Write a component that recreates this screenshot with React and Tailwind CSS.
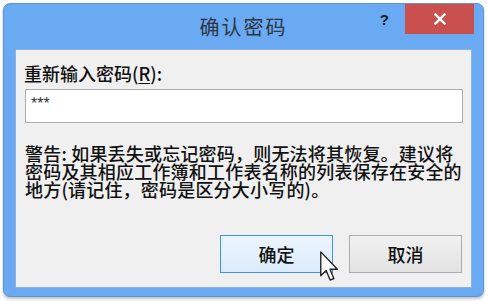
import React from "react";

function Cursor() {
  return (
    <svg width="20" height="31" viewBox="0 0 13 20" className="absolute left-[320px] top-[251px]">
      <path d="M0.5 0.5 L0.5 16 L4 12.6 L6.6 18.8 L9 17.8 L6.5 11.8 L11.3 11.8 Z" fill="#fff" stroke="#222" strokeWidth="0.9" strokeLinejoin="round" />
    </svg>
  );
}

export default function App() {
  return (
    <div className="relative w-[488px] h-[301px] bg-white overflow-hidden" style={{ fontFamily: '"Noto Sans CJK SC", "Noto Sans", sans-serif' }}>
      <div className="ml-[3px] mt-[3px] w-[481px] h-[294px] rounded-[7px] bg-[#69aaf3] border border-[#5e95d3] shadow-[0_2px_3px_rgba(0,0,0,0.25)] flex flex-col">
        <div className="h-[45px] grid grid-cols-[1fr_auto_1fr]">
          <div />
          <div className="pt-[10px] text-[20px] leading-[26px] tracking-[2px] text-[#2d3540]">确认密码</div>
          <div className="flex justify-end items-start pr-[9px]">
            <div className="mt-[7px] mr-[16px] text-[15px] leading-[18px] font-bold text-[#1a1a1a]" style={{ fontFamily: '"Liberation Sans", sans-serif' }}>?</div>
            <div className="w-[69px] h-[30px] bg-[#c9504f] flex items-center justify-center">
              <svg width="12" height="12" viewBox="0 0 12 12">
                <path d="M1.5 1.5 L10.5 10.5 M10.5 1.5 L1.5 10.5" stroke="#fff" strokeWidth="2.4" strokeLinecap="square" />
              </svg>
            </div>
          </div>
        </div>
        <div className="mx-[11px] h-[239px] bg-[#f0f0f0] border border-[#8fb2dc] flex flex-col text-[#111] font-medium">
          <div className="mt-[11px] ml-[8px] text-[18px] leading-[24px]">
            重新输入密码(<span className="underline underline-offset-[2px]">R</span>):
          </div>
          <div className="mt-[4px] ml-[9px] mr-[8px] h-[34px] bg-white border border-[#acacac] pl-[5px] pt-[6px] text-[16px] leading-[16px] text-[#333] font-normal" style={{ fontFamily: '"Liberation Sans", sans-serif' }}>
            ***
          </div>
          <p className="mt-[21px] ml-[9px] mr-[2px] text-[18px] leading-[18px] whitespace-nowrap tracking-[0.2px]">
            <span className="block">警告: 如果丢失或忘记密码，则无法将其恢复。建议将</span>
            <span className="block">密码及其相应工作簿和工作表名称的列表保存在安全的</span>
            <span className="block">地方(请记住，密码是区分大小写的)。</span>
          </p>
          <div className="mt-auto mb-[14px] mr-[9px] flex justify-end gap-[16px]">
            <div className="w-[113px] h-[38px] border border-[#3c95e0] bg-gradient-to-b from-[#ecf5fd] to-[#dcecfc] flex items-center justify-center text-[18px]">确定</div>
            <div className="w-[113px] h-[38px] border border-[#adadad] bg-gradient-to-b from-[#f0f0f0] to-[#e3e3e3] flex items-center justify-center text-[18px]">取消</div>
          </div>
        </div>
      </div>
      <Cursor />
    </div>
  );
}
